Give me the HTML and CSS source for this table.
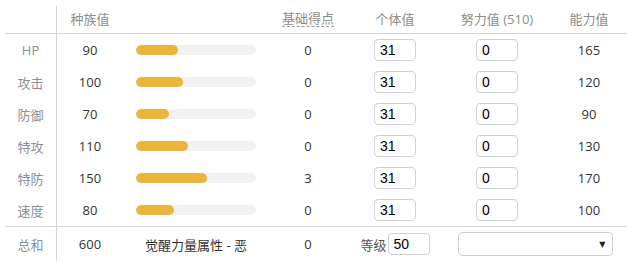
FILE: index.html
```html
<!DOCTYPE html>
<html lang="zh">
<head>
<meta charset="utf-8">
<link rel="stylesheet" href="styles.css">
</head>
<body>
<div class="stats">
  <div class="row head">
    <div class="cell lab"></div>
    <div class="cell">种族值</div>
    <div class="cell"></div>
    <div class="cell"><span class="dashed">基础得点</span></div>
    <div class="cell">个体值</div>
    <div class="cell">努力值 (510)</div>
    <div class="cell">能力值</div>
  </div>
  <div class="body">
    <div class="row">
      <div class="cell lab">HP</div><div class="cell num">90</div>
      <div class="cell"><div class="bar"><div class="fill" style="width:42px"></div></div></div>
      <div class="cell num">0</div>
      <div class="cell"><input class="inp" value="31"></div>
      <div class="cell"><input class="inp" value="0"></div>
      <div class="cell num">165</div>
    </div>
    <div class="row">
      <div class="cell lab">攻击</div><div class="cell num">100</div>
      <div class="cell"><div class="bar"><div class="fill" style="width:47px"></div></div></div>
      <div class="cell num">0</div>
      <div class="cell"><input class="inp" value="31"></div>
      <div class="cell"><input class="inp" value="0"></div>
      <div class="cell num">120</div>
    </div>
    <div class="row">
      <div class="cell lab">防御</div><div class="cell num">70</div>
      <div class="cell"><div class="bar"><div class="fill" style="width:33px"></div></div></div>
      <div class="cell num">0</div>
      <div class="cell"><input class="inp" value="31"></div>
      <div class="cell"><input class="inp" value="0"></div>
      <div class="cell num">90</div>
    </div>
    <div class="row">
      <div class="cell lab">特攻</div><div class="cell num">110</div>
      <div class="cell"><div class="bar"><div class="fill" style="width:52px"></div></div></div>
      <div class="cell num">0</div>
      <div class="cell"><input class="inp" value="31"></div>
      <div class="cell"><input class="inp" value="0"></div>
      <div class="cell num">130</div>
    </div>
    <div class="row">
      <div class="cell lab">特防</div><div class="cell num">150</div>
      <div class="cell"><div class="bar"><div class="fill" style="width:71px"></div></div></div>
      <div class="cell num">3</div>
      <div class="cell"><input class="inp" value="31"></div>
      <div class="cell"><input class="inp" value="0"></div>
      <div class="cell num">170</div>
    </div>
    <div class="row">
      <div class="cell lab">速度</div><div class="cell num">80</div>
      <div class="cell"><div class="bar"><div class="fill" style="width:38px"></div></div></div>
      <div class="cell num">0</div>
      <div class="cell"><input class="inp" value="31"></div>
      <div class="cell"><input class="inp" value="0"></div>
      <div class="cell num">100</div>
    </div>
  </div>
  <div class="row foot">
    <div class="cell lab">总和</div><div class="cell num">600</div>
    <div class="cell hp">觉醒力量属性 - 恶</div>
    <div class="cell num">0</div>
    <div class="cell level"><span class="lv">等级</span><input class="inp" value="50"></div>
    <div class="cell span2"><div class="sel"><span class="arrow">▼</span></div></div>
  </div>
</div>
</body>
</html>
```
FILE: styles.css
```css
html, body {
  margin: 0;
  padding: 0;
  background: #fff;
}
body {
  font-family: "Open Sans", "Noto Sans CJK SC", sans-serif;
  font-size: 13px;
  color: #333;
}
.stats {
  padding: 6px 0 0 5px;
  width: 622px;
}
.row {
  display: grid;
  grid-template-columns: 52px 66px 146px 78px 96px 108px 76px;
  height: 32px;
  align-items: stretch;
}
.cell {
  display: flex;
  align-items: center;
  justify-content: center;
  min-width: 0;
}
.lab {
  border-right: 1px solid #d3d6dc;
  color: #8b8f97;
}
.head {
  height: 27px;
  border-bottom: 1px solid #d3d6dc;
  color: #8c8c8c;
}
.head .cell {
  padding-bottom: 3px;
}
.dashed {
  border-bottom: 1px dashed #999;
  line-height: 16px;
}
.body {
  border-bottom: 1px solid #d3d6dc;
}
.foot {
  height: 34px;
}
.bar {
  width: 120px;
  height: 10px;
  border-radius: 5px;
  background: #f2f2f2;
  overflow: hidden;
  display: flex;
}
.fill {
  height: 100%;
  background: #eeb33c;
  border-radius: 5px;
}
.inp {
  box-sizing: border-box;
  width: 42px;
  height: 22px;
  border: 1px solid #cdd0d6;
  border-radius: 4px;
  padding: 0 5px;
  font-family: "Liberation Sans", Arial, sans-serif;
  font-size: 14px;
  color: #000;
  background: #fff;
  margin: 0;
  outline: none;
}
.level {
  gap: 1px;
}
.lv {
  color: #555;
}
.span2 {
  grid-column: span 2;
}
.sel {
  box-sizing: border-box;
  width: 155px;
  height: 24px;
  border: 1px solid #cdd0d6;
  border-radius: 4px;
  display: flex;
  align-items: center;
  justify-content: flex-end;
  padding-right: 6px;
}
.arrow {
  font-family: "DejaVu Sans", sans-serif;
  font-size: 8px;
  color: #222;
}
.hp {
  color: #333;
}
```
